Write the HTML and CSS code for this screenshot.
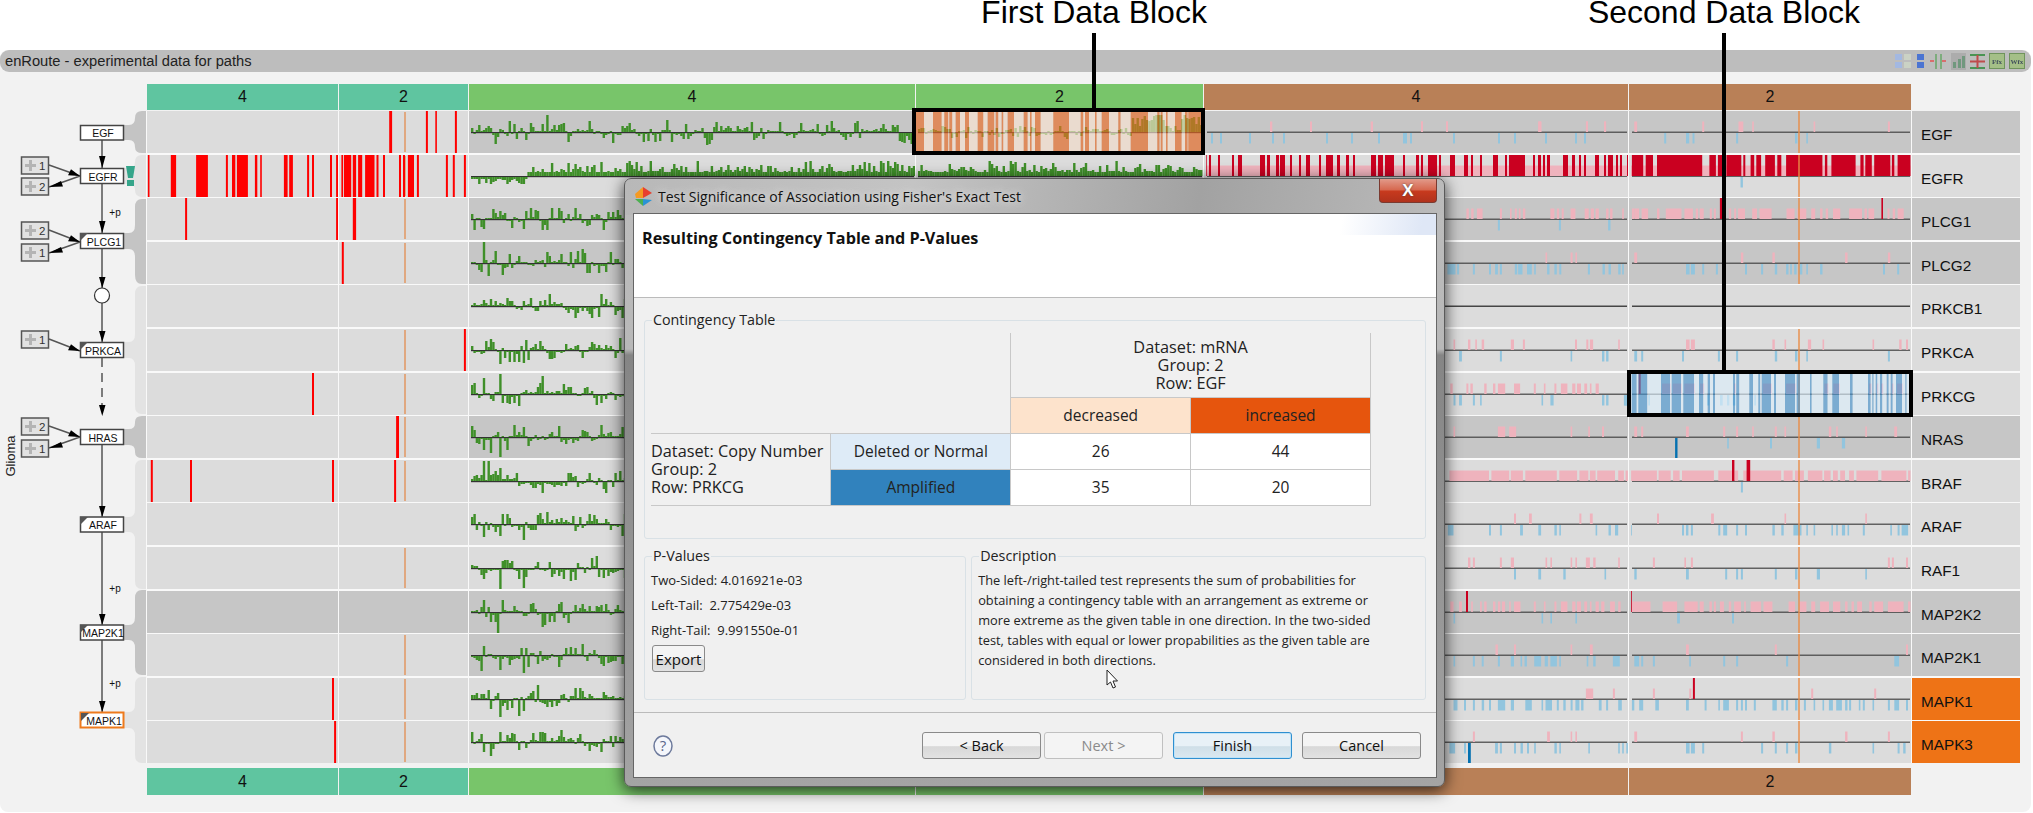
FILE: index.html
```html
<!DOCTYPE html>
<html lang="en">
<head>
<meta charset="utf-8">
<title>enRoute - experimental data for paths</title>
<link rel="stylesheet" href="styles.css">
</head>
<body>
<div class="annotation first"><span>First Data Block</span></div>
<div class="annotation second"><span>Second Data Block</span></div>
<main class="panel">
  <header class="titlebar">
    <span>enRoute - experimental data for paths</span>
    <div class="tools">
      <svg width="18" height="17" viewBox="0 0 18 17"><rect x="1" y="1" width="7" height="6" fill="#9db8ea"/><rect x="1" y="9" width="7" height="6" fill="#9db8ea"/><rect x="10" y="1" width="7" height="6" fill="#cfd8c8"/><rect x="10" y="9" width="7" height="6" fill="#cfd8c8"/></svg>
      <svg width="9" height="17" viewBox="0 0 9 17"><rect x="1" y="1" width="7" height="6" fill="#2f62d8"/><rect x="1" y="9" width="7" height="6" fill="#2f62d8"/></svg>
      <svg width="18" height="17" viewBox="0 0 18 17"><path d="M6 1h2v15H6zM11 1h2v15h-2z" fill="#6ea86e"/><path d="M1 8h4M17 8h-4" stroke="#e05a5a" stroke-width="2"/></svg>
      <svg width="15" height="17" viewBox="0 0 15 17"><rect width="15" height="17" fill="#a8a8a8"/><path d="M2 15V9h3v6zM7 15V6h3v9zM11 15V3h3v12z" fill="#5f8f6f"/></svg>
      <svg width="15" height="17" viewBox="0 0 15 17"><path d="M0 2h15M0 15h15" stroke="#2e8b3a" stroke-width="2"/><path d="M0 8.500h15M7.500 2v13" stroke="#c03030" stroke-width="2"/></svg>
      <svg width="16" height="17" viewBox="0 0 16 17"><rect x=".5" y=".5" width="15" height="15" fill="#9fc07a" stroke="#5d8a45"/><text x="3" y="11" class="fx-text">Ffx</text></svg>
      <svg width="16" height="17" viewBox="0 0 16 17"><rect x=".5" y=".5" width="15" height="15" fill="#9fc07a" stroke="#5d8a45"/><text x="1.500" y="11" class="fx-text">Wfx</text></svg>
    </div>
  </header>
  <div class="workspace">
    <svg class="pathway" width="146" height="712" viewBox="0 84 146 712">
      <text class="side" transform="translate(15 456) rotate(-90)">Glioma</text>
      <g class="brackets">
        <path class="bd" d="M146 111h-4q-7 0-7 7v0q0 7-6 7h-5v15h5q6 0 6 7v0q0 6 7 6h4z"/>
        <path class="bl" d="M146 155h-4q-7 0-7 7v0q0 6-6 6h-5v16h5q6 0 6 6v0q0 7 7 7h4z"/>
        <path class="bd" d="M146 199h-4q-7 0-7 8v18q0 8-6 8h-5v16h5q6 0 6 8v18q0 9 7 9h4z"/>
        <path class="bl" d="M146 286h-4q-7 0-7 8v40q0 8-6 8h-5v16h5q6 0 6 8v40q0 8 7 8h4z"/>
        <path class="bd" d="M146 416h-4q-7 0-7 6v1q0 6-6 6h-5v16h5q6 0 6 6v1q0 6 7 6h4z"/>
        <path class="bl" d="M146 460h-4q-7 0-7 8v41q0 8-6 8h-5v15h5q6 0 6 8v41q0 8 7 8h4z"/>
        <path class="bd" d="M146 590h-4q-7 0-7 8v19q0 8-6 8h-5v15h5q6 0 6 8v19q0 8 7 8h4z"/>
        <path class="bl" d="M146 677h-4q-7 0-7 8v19q0 8-6 8h-5v16h5q6 0 6 8v19q0 8 7 8h4z"/>
      </g>
      <g class="edges">
        <path d="M102 140v28M102 184v49M102 249v39M102 303v39M102 445v72M102 532v93M102 640v72"/>
        <path class="dash" d="M102 358v58"/>
        <path d="M49 165l31 11M80 176l-31 11M49 230l31 12M80 242l-31 11M49 339l31 12M49 426l31 11M80 437l-31 11"/>
      </g>
      <g class="heads">
        <path d="M99 156h6.500l-3.250 12zM99 221h6.500l-3.250 12zM99 277h6.500l-3.250 11zM99 331h6.500l-3.250 11zM99 405h6.500l-3.250 11zM99 506h6.500l-3.250 11zM99 614h6.500l-3.250 11zM99 701h6.500l-3.250 11z"/>
        <path d="M80 176l-12-.8 3-6zM49 187l12-6 2 5.500zM80 242l-12-.8 3-6zM49 253l12-6 2 5.500zM80 351l-12-.8 3-6zM80 437l-12-.8 3-6zM49 448l12-6 2 5.500z"/>
      </g>
      <g class="stub"><rect x="21.500" y="157" width="27" height="17"/><path d="M29 160h3v4h4v3h-4v4h-3v-4h-4v-3h4z"/><text x="39" y="170">1</text></g>
      <g class="stub"><rect x="21.500" y="178" width="27" height="17"/><path d="M29 181h3v4h4v3h-4v4h-3v-4h-4v-3h4z"/><text x="39" y="191">2</text></g>
      <g class="stub"><rect x="21.500" y="222" width="27" height="17"/><path d="M29 225h3v4h4v3h-4v4h-3v-4h-4v-3h4z"/><text x="39" y="235">2</text></g>
      <g class="stub"><rect x="21.500" y="244" width="27" height="17"/><path d="M29 247h3v4h4v3h-4v4h-3v-4h-4v-3h4z"/><text x="39" y="257">1</text></g>
      <g class="stub"><rect x="21.500" y="331" width="27" height="17"/><path d="M29 334h3v4h4v3h-4v4h-3v-4h-4v-3h4z"/><text x="39" y="344">1</text></g>
      <g class="stub"><rect x="21.500" y="418" width="27" height="17"/><path d="M29 421h3v4h4v3h-4v4h-3v-4h-4v-3h4z"/><text x="39" y="431">2</text></g>
      <g class="stub"><rect x="21.500" y="440" width="27" height="17"/><path d="M29 443h3v4h4v3h-4v4h-3v-4h-4v-3h4z"/><text x="39" y="453">1</text></g>
      <g class="node"><rect x="80.500" y="125.500" width="43" height="14.500"/><text x="103" y="137">EGF</text></g>
      <g class="node"><rect x="80.500" y="168.500" width="43" height="15"/><text x="103" y="181">EGFR</text></g>
      <g class="node"><rect x="80.500" y="233.500" width="43" height="15"/><path d="M80 233h8l-8 8z"/><text x="104" y="246">PLCG1</text></g>
      <ellipse class="junction" cx="102" cy="295.500" rx="7.500" ry="7.500"/>
      <g class="node"><rect x="80.500" y="342.500" width="43" height="15"/><path d="M80 342h8l-8 8z"/><text x="103" y="355">PRKCA</text></g>
      <g class="node"><rect x="80.500" y="429.500" width="43" height="15"/><text x="103" y="442">HRAS</text></g>
      <g class="node"><rect x="80.500" y="517" width="43" height="15"/><path d="M80 517h8l-8 8z"/><text x="103" y="529">ARAF</text></g>
      <g class="node"><rect x="80.500" y="625" width="43" height="15"/><path d="M80 625h8l-8 8z"/><text x="103" y="637">MAP2K1</text></g>
      <g class="node hot"><rect x="80.500" y="712.500" width="43" height="15"/><path d="M81 713h8l-8 8z"/><text x="104" y="725">MAPK1</text></g>
      <text class="mod" x="115" y="216">+p</text>
      <text class="mod" x="115" y="592">+p</text>
      <text class="mod" x="115" y="687">+p</text>
      <path class="alert" d="M126 166h9l-2 12h-5zM127 180h7v6h-7z"/>
    </svg>
    <div class="data">
      <div class="groups"><div class="h teal">4</div><div class="h teal">2</div><div class="h green">4</div><div class="h green">2</div><div class="h brown">4</div><div class="h brown">2</div></div>
      <div class="rows" id="rows">
        <div class="row dk"><i></i><i></i><i></i><i></i><i></i><i></i><b>EGF</b></div>
        <div class="row"><i></i><i></i><i></i><i></i><i></i><i></i><b>EGFR</b></div>
        <div class="row dk"><i></i><i></i><i></i><i></i><i></i><i></i><b>PLCG1</b></div>
        <div class="row dk"><i></i><i></i><i></i><i></i><i></i><i></i><b>PLCG2</b></div>
        <div class="row"><i></i><i></i><i></i><i></i><i></i><i></i><b>PRKCB1</b></div>
        <div class="row"><i></i><i></i><i></i><i></i><i></i><i></i><b>PRKCA</b></div>
        <div class="row"><i></i><i></i><i></i><i></i><i></i><i></i><b>PRKCG</b></div>
        <div class="row dk"><i></i><i></i><i></i><i></i><i></i><i></i><b>NRAS</b></div>
        <div class="row"><i></i><i></i><i></i><i></i><i></i><i></i><b>BRAF</b></div>
        <div class="row"><i></i><i></i><i></i><i></i><i></i><i></i><b>ARAF</b></div>
        <div class="row"><i></i><i></i><i></i><i></i><i></i><i></i><b>RAF1</b></div>
        <div class="row dk all"><i></i><i></i><i></i><i></i><i></i><i></i><b>MAP2K2</b></div>
        <div class="row dk"><i></i><i></i><i></i><i></i><i></i><i></i><b>MAP2K1</b></div>
        <div class="row"><i></i><i></i><i></i><i></i><i></i><i></i><b class="picked">MAPK1</b></div>
        <div class="row"><i></i><i></i><i></i><i></i><i></i><i></i><b class="picked">MAPK3</b></div>
      </div>
      <div class="groups bottom"><div class="h teal">4</div><div class="h teal">2</div><div class="h green">4</div><div class="h green">2</div><div class="h brown">4</div><div class="h brown">2</div></div>
    </div>
  </div>
</main>
<div class="block one" id="block1"></div>
<div class="block two" id="block2"></div>
<section class="dialog">
  <div class="win-title">
    <svg class="logo" width="17" height="19" viewBox="0 0 17 19"><path d="M0 7 8 0v11H1z" fill="#f59a23"/><path d="M8 0l9 6-9 5z" fill="#e8402f"/><path d="M0 12h8v7z" fill="#4cb050"/><path d="M8 12l9 1-9 6z" fill="#2a93d5"/></svg>
    <span>Test Significance of Association using Fisher's Exact Test</span>
    <button class="close" type="button">X</button>
  </div>
  <div class="win-body">
    <div class="banner"><h1>Resulting Contingency Table and P-Values</h1></div>
    <div class="content">
      <fieldset class="group table-group">
        <legend>Contingency Table</legend>
        <table>
          <tr><td class="blank" colspan="2" rowspan="2"></td><td class="head" colspan="2">Dataset: mRNA<br>Group: 2<br>Row: EGF</td></tr>
          <tr><td class="dec">decreased</td><td class="inc">increased</td></tr>
          <tr><td class="left" rowspan="2">Dataset: Copy Number<br>Group: 2<br>Row: PRKCG</td><td class="del">Deleted or Normal</td><td>26</td><td>44</td></tr>
          <tr><td class="amp">Amplified</td><td>35</td><td>20</td></tr>
        </table>
      </fieldset>
      <div class="lower">
        <fieldset class="group pvalues">
          <legend>P-Values</legend>
          <p>Two-Sided: 4.016921e-03</p>
          <p>Left-Tail:&nbsp; 2.775429e-03</p>
          <p>Right-Tail:&nbsp; 9.991550e-01</p>
          <button class="btn export" type="button">Export</button>
        </fieldset>
        <fieldset class="group desc">
          <legend>Description</legend>
          <p>The left-/right-tailed test represents the sum of probabilities for<br>obtaining a contingency table with an arrangement as extreme or<br>more extreme as the given table in one direction. In the two-sided<br>test, tables with equal or lower propabilities as the given table are<br>considered in both directions.</p>
        </fieldset>
      </div>
    </div>
    <footer class="win-foot">
      <svg class="help" width="20" height="22" viewBox="0 0 20 22"><ellipse cx="10" cy="11" rx="9" ry="10" fill="#f4f6fb" stroke="#6d7a9c" stroke-width="1.500"/><text x="10" y="16" class="help-text">?</text></svg>
      <div class="actions">
        <button class="btn wide" type="button">&lt; Back</button>
        <button class="btn wide off" type="button">Next &gt;</button>
        <button class="btn wide primary" type="button">Finish</button>
        <button class="btn wide" type="button">Cancel</button>
      </div>
    </footer>
  </div>
</section>
<svg class="cursor" width="13" height="20" viewBox="0 0 13 20"><path d="M1 1v15l3.500-3 2.500 6 2.500-1-2.500-6h4.500z" fill="#fff" stroke="#222"/></svg>
<script src="app.js"></script>
</body>
</html>
```
FILE: styles.css
```css
* { box-sizing: border-box; }
html, body { margin: 0; padding: 0; }
body { width: 2033px; height: 813px; overflow: hidden; background: #fff; position: relative; font-family: "Liberation Sans", Arial, sans-serif; color: #111; }

.annotation { position: absolute; top: 0; width: 4px; height: 108px; background: linear-gradient(#fff 33px, #000 33px); }
.annotation span { position: absolute; top: 0; left: 50%; transform: translateX(-50%); white-space: nowrap; font-size: 32px; line-height: 24px; color: #000; }
.annotation.first { left: 1092px; z-index: 5; }
.annotation.second { left: 1722px; height: 371px; z-index: 5; }

.panel { position: absolute; top: 50px; left: 0; width: 2031px; height: 762px; background: #f2f2f2; border-radius: 8px; }
.titlebar { height: 22px; padding: 0 5px; background: #bdbdbd; border-radius: 9px; display: flex; align-items: center; justify-content: space-between; font-size: 14.700px; color: #222; }
.tools { display: flex; align-items: center; gap: 4px; padding-right: 1px; opacity: .8; filter: blur(.5px); }
.fx-text { font: bold 7px "Liberation Serif", serif; fill: #234; }

.workspace { display: flex; padding-top: 12px; }
.pathway { flex: none; display: block; }
.side { font-size: 13px; fill: #222; text-anchor: middle; }
.bd { fill: #c4c4c4; }
.bl { fill: #e3e3e3; }
.edges path { fill: none; stroke: #555; stroke-width: 1.500; }
.edges .dash { stroke-dasharray: 9 6; }
.heads path { fill: #000; }
.stub rect { fill: #e2e2e2; stroke: #555; stroke-width: 1.500; }
.stub path { fill: #b4b4b4; }
.stub text { font-size: 11.500px; fill: #333; }
.node rect { fill: #fff; stroke: #444; stroke-width: 1.500; }
.node path { fill: #555; }
.node text { font-size: 10.500px; fill: #111; text-anchor: middle; }
.node.hot rect { stroke: #ee7a1c; stroke-width: 2; }
.junction { fill: #fff; stroke: #333; stroke-width: 1.200; }
.mod { font-size: 10px; fill: #111; text-anchor: middle; }
.alert { fill: #35a58a; }

.data { flex: none; width: 1875px; }
.groups { display: grid; grid-template-columns: 192px 130px 447px 288px 425px 283px; height: 26px; }
.groups.bottom { height: 27px; margin-top: 5px; }
.h { display: flex; align-items: center; justify-content: center; font-size: 16px; color: #111; border-left: 1px solid #f2f2f2; }
.teal { background: #5fc5a0; }
.green { background: #78c56a; }
.brown { background: #b98057; }
.rows { margin-top: 1px; display: grid; grid-template-rows: repeat(15, 42px); row-gap: 1.600px; background: #f9f9f9; width: 1874px; }
.row { display: grid; grid-template-columns: 192px 130px 447px 288px 425px 283px 109px; }
.row i { display: block; background: #dcdcdc; border-left: 1.500px solid #f9f9f9; position: relative; min-width: 0; }
.row.dk i:nth-child(n+3) { background: #c6c6c6; }
.row.all i { background: #c6c6c6; }
.row i svg { position: absolute; left: 0; top: 0; display: block; }
.row b { display: flex; align-items: center; padding: 6px 0 0 9px; font-weight: normal; font-size: 15.300px; color: #111; background: #dcdcdc; border-left: 1.500px solid #f9f9f9; }
.row.dk b { background: #c6c6c6; }
.row b.picked { background: #ee7316; }

.block { position: absolute; border: 4px solid #000; z-index: 3; }
.block svg { display: block; }
.block.one { left: 912px; top: 108px; width: 293px; height: 47px; }
.block.two { left: 1627px; top: 370px; width: 286px; height: 47px; }

.dialog { position: absolute; left: 624px; top: 178px; width: 821px; height: 609px; z-index: 4; padding: 0 7px 8px 8px; display: flex; flex-direction: column; border: 1px solid #5a5a5a; border-radius: 7px; box-shadow: 0 3px 16px rgba(0,0,0,.75); background: linear-gradient(100deg, #b8b8b8 0%, #c4c4c4 35%, #a2a2a2 70%, #bbb 100%) top / 100% 36px no-repeat, linear-gradient(#bdbdbd 0, #b8b8b8 170px, #858585 176px, #a4a4a4 100%); font-family: "Open Sans", "Noto Sans", sans-serif; }
.win-title { flex: none; height: 34px; display: flex; align-items: flex-start; }
.logo { margin: 8px 6px 0 2px; flex: none; }
.win-title span { margin-top: 9px; font-size: 14px; line-height: 18px; color: #111; text-shadow: 0 0 6px #ddd, 0 0 10px #ddd; }
.close { margin-left: auto; width: 58px; height: 24px; padding: 0; border: 1px solid #7a3a30; border-top: 0; border-radius: 0 0 4px 4px; background: linear-gradient(#e29a8a, #d6674e 48%, #c83a1e 52%, #b0321c); color: #fff; font: bold 17px/22px "Liberation Sans", sans-serif; text-shadow: 0 0 2px #444; }
.win-body { flex: 1; min-height: 0; border: 1px solid #666; background: #f0f0f0; display: flex; flex-direction: column; }
.banner { flex: none; height: 84px; background: linear-gradient(100deg, rgba(255,255,255,0) 88%, #dfe7f6 98%) top / 100% 21px no-repeat #fff; border-bottom: 1px solid #bbb; padding: 14px 8px 0; }
.banner h1 { margin: 0; font-size: 16.200px; line-height: 20px; font-weight: 700; color: #111; }
.content { flex: none; height: 414px; padding: 14px 10px 0; }
.group { margin: 0; padding: 0 6px; border: 1px solid #d9e1e6; border-radius: 3px; min-width: 0; }
.group legend { margin-left: 1px; padding: 0 1px; font-size: 14.300px; line-height: 16px; color: #222; }
.table-group { height: 227px; }
table { border-collapse: collapse; table-layout: fixed; width: 720px; margin-top: 5px; font-size: 15.500px; color: #222; }
td { width: 180px; height: 36px; padding: 0; text-align: center; background: #fff; border: 1px solid #c8c8c8; }
td.blank { background: none; border: 0; border-bottom: 1px solid #c8c8c8; border-right: 1px solid #c8c8c8; }
td.head { height: 64px; line-height: 18px; font-size: 16.300px; background: none; border-top: 0; }
td.dec { background: #fde3cc; }
td.inc { background: #e6550d; }
td.left { background: none; text-align: left; line-height: 18px; font-size: 16.300px; border-left: 0; white-space: nowrap; }
td.del { background: #deebf7; }
td.amp { background: #3182bd; }
.lower { display: flex; gap: 5px; margin-top: 9px; }
.pvalues { width: 323px; height: 152px; }
.desc { width: 456px; height: 152px; }
.pvalues p { margin: 0; font-size: 13px; line-height: 25px; color: #222; }
.pvalues p:first-of-type { margin-top: 4px; }
.desc p { margin: 0; padding-top: 6px; font-size: 12.800px; line-height: 20px; white-space: nowrap; color: #222; }
.btn { border: 1px solid #8a8a8a; border-radius: 3px; background: linear-gradient(#f4f4f4 50%, #d8d8d8 55%, #e2e2e2); font-family: inherit; font-size: 14.500px; color: #111; padding: 0; }
.export { display: block; width: 53px; height: 27px; margin: 2px 0 0 1px; font-size: 15px; }
.win-foot { flex: 1; border-top: 1px solid #bbb; display: flex; align-items: flex-start; justify-content: space-between; padding: 19px 15px 0 19px; }
.help { margin-top: 3px; }
.help-text { font-size: 15px; fill: #5a678a; text-anchor: middle; }
.actions { display: flex; gap: 10px; }
.wide { width: 119px; height: 27px; }
.wide:first-child { margin-right: -7px; }
.off { background: #f4f4f4; color: #8a8a8a; border-color: #c0c0c0; }
.primary { border: 1px solid #2f8fd0; box-shadow: inset 0 0 0 1px #bfe3f7; background: linear-gradient(#e8f1f7 50%, #cfdfe8 55%, #dbe8f0); }
.cursor { position: absolute; left: 1106px; top: 669px; z-index: 6; }
```
FILE: app.js
```js
// Draws the data cells of the enRoute table. Positions are read off the reference:
// each list holds start-end pairs on a measuring scale [origin, factor].
var Z1 = [0, 2.45], Z5 = [1400, 2.477], Z8 = [1200, 3], Z9 = [905, 3], Z10 = [1620, 3];
var COLS = [146, 338, 468, 915, 1203, 1628, 1911];
var ROWS = [
 { hiL: 1, L: "951-958,1041-1046,1064-1068,1112-1117", peaks: [[1338,17],[1245,11],[1378,9],[1262,-6]], m: [
  ["p",Z8,"207-214,327-333,509-516,660-666,735-741,1012-1020,1155-1161,1209-1215"],
  ["b",Z8,"30-36,57-63,144-150,213-219,246-252,375-381,450-456,531-537,606-618,627-633,756-762,891-897,939-945,1032-1038,1122-1128,1149-1155"],
  ["p",Z5,"50-54,112-116,340-348,458-463,504-508,578-585,746-751,836-848,870-874,1022-1026,1206-1211"],
  ["b",Z5,"652-657,706-714,722-727,830-835,976-982,1004-1008"]] },
 { hiL: 1, L: "360-364,416-429,478-507,551-556,566-574,578-605,622-628,635-639,693-702,706-715,750-755,762-767,806-811,821-826,834-838,840-858,862-870,875-885,892-915,920-925,936-941,975-980,985-990,997-1012,1019-1024,1090-1095,1107-1112,1134-1139", egfr: 1, peaks: [[1300,9]], m: [
  ["p",Z8,"15-1278,1290-1320"],
  ["r",Z8,"15-17,24-30,51-57,93-99,111-123,177-192,198-207,225-234,237-252,267-273,294-300,315-327,354-360,375-396,408-417,435-444,456-462,510-525,531-546,552-579,606-612,645-654,660-666,681-708,714-720,747-762,789-801,810-816,837-843,876-891,912-918,924-972,996-1002,1011-1020,1026-1032,1038-1047,1086-1101,1113-1122,1134-1140,1149-1155,1182-1194,1209-1215,1221-1236,1245-1251,1257-1263,1278-1281"],
  ["p",Z5,"590-1262"],
  ["r",Z5,"572-600,606-624,634-746,764-780,785-800,806-843,848-853,866-875,880-892,902-926,932-942,954-1044,1050-1056,1066-1126,1138-1146,1150-1166,1172-1212,1216-1222,1230-1262"],
  ["b",Z5,"841-847"]] },
 { hiL: 1, L: "451-456,821-826,862-870", peaks: [[1315,8],[1233,6],[1278,-9],[1160,-10]], m: [
  ["p",Z5,"162-168,174-180,188-202,245-250,270-274,282-287,292-296,302-308,370-380,386-392,398-403,420-432,455-465,470-478,482-490,508-514,518-524,548-552,572-578,578-590,596-612,634-640,656-695,702-723,730-736,740-750,765-770,775-780,812-818,825-830,835-852,870-882,888-918,955-975,982-1004,1016-1026,1038-1044,1052-1058,1070-1088,1110-1142,1148-1154,1158-1172,1205-1210,1218-1224,1230-1245"],
  ["r",Z5,"790-798,1190-1194"],
  ["b",Z5,"240-245,391-396,513-519"]] },
 { hiL: 1, L: "835-840", peaks: [[1178,21],[1208,12],[1190,-12],[1420,14],[1392,11]], m: [
  ["p",Z5,"358-362,420-425,432-436,578-585,842-848,920-926,1100-1106,1206-1212"],
  ["b",Z5,"115-135,139-144,178-183,218-223,233-240,245-250,282-288,290-301,312-324,330-334,362-368,380-386,392-397,463-468,499-505,514-520,538-544,548-552,706-715,718-728,746-751,780-785,852-857,892-897,926-932,954-960,964-968,974-980,986-994,1004-1008,1038-1044,1194-1199,1229-1234"]] },
 { L: "", peaks: [[1178,18],[1182,6],[1332,6]], m: [] },
 { hiL: 1, L: "1134-1139", down: 1, peaks: [[1188,9],[1222,-13],[1278,-12]], m: [
  ["p",Z5,"130-134,166-172,184-188,200-206,272-280,302-307,431-436,459-464,468-476,538-542,706-715,718-728,920-926,950-954,1008-1016,1044-1048,1168-1172,1234-1240,1251-1256"],
  ["b",Z5,"144-151,245-250,420-424,498-504,508-514,578-585,595-600,696-701,785-790,830-835,926-932,976-982,1004-1008,1206-1211"]] },
 { hiL: 1, L: "762-767", peaks: [[1222,20],[1323,18],[1178,16],[1375,10]], m: [
  ["p",Z5,"122-128,162-167,172-178,206-212,228-234,240-258,280-295,329-334,354-358,380-385,396-412,424-432,436-446,454-461,468-472,482-490"],
  ["b",Z5,"130-135,144-151,178-183,196-200,348-352,370-378,498-504,508-514,552-560"],
  ["p",Z10,"123-150,155-183,190-222,237-250,339-345,425-453,495-525,610-623,637-657,744-752,767-772,780-787,812-818,828-846"],
  ["b",Z10,"10-18,82-87,258-265,297-305,318-325,335-345,400-405"],
  ["r",Z10,"53-59"]] },
 { hiL: 1, L: "968-975", peaks: [[1222,-19],[1367,11],[1200,-15],[1380,-6]], m: [
  ["p",Z5,"130-134,240-258,268-285,420-424,464-468,498-503,578-585,595-600,706-713,798-803,830-835,870-874,926-931,950-954,1060-1066,1078-1082,1150-1154,1222-1229"],
  ["b",Z5,"808-812,914-919,1030-1038,1092-1100"],
  ["d",Z5,"679-685"]] },
 { hiL: 1, L: "367-372,463-468,811-816,963-968", peaks: [[1178,20],[1190,20],[1222,13],[1218,13]], m: [
  ["p",Z5,"120-218,224-268,272-302,308-386,392-436,442-464,468-482,486-530,538-552,556-562,570-634,638-668,674-690,696-775,786-820,826-835,848-942,948-970,976-998,1008-1044,1048-1064,1070-1082,1088-1100,1110-1122,1128-1182,1190-1252,1256-1262"],
  ["r",Z5,"820-826,856-865"],
  ["b",Z5,"842-847"]] },
 { L: "", peaks: [[1160,10],[1278,-15],[1218,-11],[1228,10]], m: [
  ["p",Z5,"280-285,317-324,442-447,468-475,634-639,768-775,950-954,1150-1154"],
  ["b",Z5,"116-130,218-223,245-250,295-302,340-347,380-386,392-396,482-486,514-520,530-538,570-572,696-701,706-712,718-723,786-791,798-808,830-835,852-857,920-926,942-948,972-992,1004-1008,1022-1026,1066-1070,1078-1082,1092-1100,1106-1110,1144-1149,1212-1216,1230-1235,1240-1256"]] },
 { hiL: 1, L: "", down: 1, peaks: [[1220,-20],[1278,-19],[1312,6],[1340,6],[1375,-10]], m: [
  ["p",Z5,"166-172,178-183,245-250,272-280,358-362,370-374,420-424,432-436,458-468,476-482,538-542,624-629,702-706,718-723,1206-1211,1216-1221,1251-1256"],
  ["b",Z5,"280-285,340-347,402-408,504-508,578-584,706-713,803-808,830-835,842-847,926-931,976-982,1030-1038,1150-1154"]] },
 { L: "", peaks: [[1217,-20],[1323,-14],[1370,10],[1295,8],[1190,5]], m: [
  ["p",Z5,"122-130,144-151,174-178,196-200,206-212,228-234,240-246,250-258,268-272,280-296,329-334,354-358,380-385,396-412,424-432,436-446,454-461,468-472,482-490,496-504,518-530,538-544,572-618,648-684,702-735,740-750,764-770,775-780,790-800,812-818,825-842,850-854,866-892,898-920,960-976,986-1004,1016-1026,1038-1060,1070-1088,1100-1106,1116-1122,1130-1142,1160-1166,1172-1194,1206-1245,1256-1262"],
  ["r",Z5,"161-166,570-572"],
  ["b",Z5,"130-134,348-352,370-374,432-436,684-691,820-825"]] },
 { hiL: 1, L: "", peaks: [[1180,9],[1278,-17],[1220,-14],[1172,-15],[1395,8]], m: [
  ["p",Z5,"234-240,280-285,420-424,468-475,706-713,926-931,1251-1256"],
  ["b",Z5,"130-134,178-183,200-205,240-245,272-280,296-300,306-312,330-347,356-364,370-386,392-396,460-464,476-482,525-542,578-590,595-600,624-629,714-718,798-803,830-835,954-959,1222-1234"]] },
 { hiL: 1, L: "811-816", peaks: [[1222,-17],[1265,-16],[1312,14],[1190,9],[1300,8]], m: [
  ["p",Z5,"458-476,525-530,624-629,714-719,1016-1021,1172-1177"],
  ["r",Z5,"723-728"],
  ["b",Z5,"130-140,156-161,178-183,200-206,218-223,240-258,272-280,308-324,348-352,358-374,386-391,402-408,420-425,432-442,446-452,490-497,508-513,538-547,572-578,590-600,630-639,706-713,752-757,786-790,798-812,830-835,842-847,852-857,874-879,920-931,942-948,954-959,976-982,998-1003,1022-1026,1044-1048,1060-1070,1078-1092,1100-1106,1110-1115,1134-1138,1144-1149,1168-1172,1206-1211,1222-1234,1251-1256"]] },
 { hiL: 1, L: "816-821", peaks: [[1200,-13],[1367,6],[1470,-9]], m: [
  ["p",Z5,"178-183,362-369,420-424,432-436,578-585,842-847,920-926,1100-1106,1206-1211"],
  ["b",Z5,"120-134,156-161,233-240,245-250,280-285,296-302,312-317,330-334,380-386,392-396,464-468,538-542,548-552,558-562,706-715,718-728,746-751,892-897,926-931,954-959,976-982,1060-1066,1168-1172,1230-1235,1244-1250"],
  ["d",Z5,"166-173"]] }
];
var BAND = { p: [10.5, 10.5, "#efb3bd"], b: [22, 10.5, "#92c5de"], r: [0, 21, "#ca0020"], d: [22, 20, "#0571b0"] };

function spans(list, scale) {
  if (!list) return [];
  return list.split(",").map(function (s) {
    var a = s.split("-");
    return [scale[0] + a[0] / scale[1], scale[0] + a[1] / scale[1]];
  });
}
function rect(x, y, w, h, fill) {
  return '<rect x="' + x.toFixed(1) + '" y="' + y + '" width="' + w.toFixed(1) + '" height="' + h + '" fill="' + fill + '"/>';
}
function random(seed) {
  return function () {
    seed = (seed + 0x6D2B79F5) | 0;
    var t = Math.imul(seed ^ (seed >>> 15), 1 | seed);
    t = (t + Math.imul(t ^ (t >>> 7), 61 | t)) ^ t;
    return ((t ^ (t >>> 14)) >>> 0) / 4294967296;
  };
}
function spark(row, i, left, right) {
  var rnd = random(7919 * (i + 1) + left), out = "", x, up = true;
  var peaks = row.peaks.map(function (p) { return [p[0] / Z1[1], p[1]]; });
  for (x = left + 2; x < right - 2; x += 2.35) {
    var h = Math.pow(rnd(), 2.6) * 11 + 1;
    if (rnd() > 0.62) up = rnd() > (row.down ? 0.68 : 0.42);
    if (row.egfr) { up = x > 525; h = up ? h + 3 : Math.min(h + 1, 7); }
    if (i === 0 && x > 916) { up = rnd() > 0.25; h = Math.pow(rnd(), 2) * 5 + 1; if ((x > 1130 && x < 1165) || x > 1180) { up = true; h = 6 + rnd() * 12; } }
    var v = up ? h : -h;
    peaks.forEach(function (p) { if (Math.abs(p[0] - x) < 1.2) v = p[1]; });
    v = Math.round(v);
    if (v === 0) continue;
    out += rect(x - left, v > 0 ? 21 - v : 22, 2.35, Math.abs(v), "#3f8f29");
  }
  return out;
}
function build() {
  var rows = document.querySelectorAll("#rows .row");
  ROWS.forEach(function (row, i) {
    var cells = rows[i].querySelectorAll("i");
    cells.forEach(function (cell, c) {
      var left = COLS[c], right = COLS[c + 1], w = right - left, inner = "";
      if (c < 2) {
        spans(row.L, Z1).forEach(function (s) {
          if (s[0] >= left && s[0] < right) inner += rect(s[0] - left, 0, s[1] - s[0], 42, "#ff0000");
        });
        if (c === 1 && row.hiL && i !== 9 && i !== 11 && i !== 4) inner = rect(403 - left, 1, 2, 40, "#e0a880") + inner;
      } else if (c < 4) {
        inner += rect(2, 21, w - 4, 1.2, "#333");
        inner += spark(row, i, left, right);
      } else {
        inner += rect(3, 20.6, w - 5, 1.2, i === 4 ? "#222" : "#444");
        row.m.forEach(function (m) {
          var band = BAND[m[0]];
          spans(m[2], m[1]).forEach(function (s) {
            var a = Math.max(s[0], left + 1), b = Math.min(s[1], right - 1);
            if (b > a) inner += rect(a - left, band[0], b - a, band[1], band[2]);
          });
        });
        if (c === 5 && i !== 4) inner += rect(1797 - left, 0, 2, 42, "rgba(232,140,70,.7)");
      }
      cell.innerHTML = '<svg width="' + w + '" height="42">' + inner + "</svg>";
    });
  });
}
function block(id, w, h, scale, x0, dark, light, strong) {
  var out = "", cursor = 0;
  spans(dark, scale).forEach(function (s) {
    var a = s[0] - x0, b = s[1] - x0;
    if (a > cursor) out += rect(cursor, 0, a - cursor, h, light);
    out += rect(a, 0, b - a, h, strong);
    cursor = b;
  });
  if (cursor < w) out += rect(cursor, 0, w - cursor, h, light);
  document.getElementById(id).innerHTML = '<svg width="' + w + '" height="' + h + '">' + out + "</svg>";
}
build();
block("block1", 285, 39, Z9, 916,
  "33-57,84-110,118-130,133-142,152-165,180-192,218-235,248-268,272-280,290-295,308-327,356-368,375-380,390-407,445-492,527-535,540-552,570-575,590-612,640-647,677-729,757-764,767-773,783-788,810-830,840-848,850-890",
  "rgba(254,230,212,.65)", "rgba(235,107,37,.65)");
block("block2", 278, 39, Z10, 1631,
  "35-50,55-82,123-150,155-183,190-222,237-250,263-270,279-285,339-345,349-358,388-399,415-421,425-453,462-468,495-525,530-540,570-575,610-623,637-657,690-698,744-752,757-761,767-772,780-787,800-806,812-818,828-846,856-860",
  "rgba(220,238,250,.65)", "rgba(70,146,203,.65)");
```
